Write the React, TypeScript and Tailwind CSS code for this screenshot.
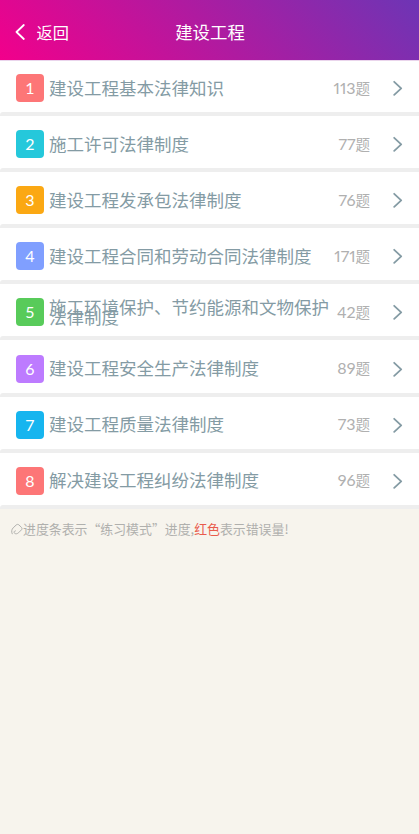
interface Chapter {
  title: string;
  count: number;
  color: string;
}

const chapters: Chapter[] = [
  { title: "建设工程基本法律知识", count: 113, color: "bg-[#fd7677]" },
  { title: "施工许可法律制度", count: 77, color: "bg-[#25c8db]" },
  { title: "建设工程发承包法律制度", count: 76, color: "bg-[#fba813]" },
  { title: "建设工程合同和劳动合同法律制度", count: 171, color: "bg-[#809fff]" },
  { title: "施工环境保护、节约能源和文物保护法律制度", count: 42, color: "bg-[#58cb5a]" },
  { title: "建设工程安全生产法律制度", count: 89, color: "bg-[#bd7bff]" },
  { title: "建设工程质量法律制度", count: 73, color: "bg-[#16b5ef]" },
  { title: "解决建设工程纠纷法律制度", count: 96, color: "bg-[#fd7677]" },
];

const Header: React.FC = () => {
  return (
    <header className="grid h-[60px] grid-cols-[1fr_auto_1fr] items-center bg-[linear-gradient(45deg,#f2008b_0%,#6d35b5_100%)] pt-[3px] text-white">
      <button className="flex items-center pl-[15px] text-[16.2px] leading-5">
        <svg width="10" height="16" viewBox="0 0 10 16" fill="none" className="mr-[11.5px]">
          <path
            d="M8.8 1 1.500 8l7.300 7"
            stroke="currentColor"
            strokeWidth="1.8"
            strokeLinecap="round"
            strokeLinejoin="round"
          />
        </svg>
        返回
      </button>
      <h1 className="pl-px text-[17.4px] leading-5">建设工程</h1>
    </header>
  );
};

const ChapterRow: React.FC<{ chapter: Chapter; index: number }> = ({
  chapter,
  index,
}) => {
  return (
    <li className="flex h-[56.1px] flex-col bg-white first:shadow-[inset_0_1px_0_#ead5ec]">
      <div className="flex grow items-center pt-1 pr-4 pl-4">
        <span
          className={`${chapter.color} mr-[5px] flex size-7 shrink-0 items-center justify-center rounded-[4px] font-['Lato','Noto_Sans_CJK_SC',sans-serif] text-[16px] text-white`}
        >
          {index + 1}
        </span>
        <span className="-mr-1 w-[284px] shrink-0 pb-px text-[17.5px] leading-[10px] text-[#849ba4]">
          {chapter.title}
        </span>
        <span className="flex min-w-0 grow items-baseline justify-end whitespace-nowrap font-['Lato','Noto_Sans_CJK_SC',sans-serif] leading-5 text-[#b0b0b0]">
          <span className="text-[16px] proportional-nums">{chapter.count}</span>
          <span className="text-[14.5px]">题</span>
        </span>
        <svg
          width="10"
          height="16"
          viewBox="0 0 10 16"
          fill="none"
          className="ml-[23px] shrink-0"
        >
          <path
            d="m1.200 1.800 7 6.500-7 6.500"
            stroke="#849ba4"
            strokeWidth="1.8"
            strokeLinecap="round"
            strokeLinejoin="round"
          />
        </svg>
      </div>
      <div className="h-1 shrink-0 rounded-tl-[3px] bg-[#eeeeee]" />
    </li>
  );
};

export default function App() {
  return (
    <div className="min-h-screen bg-[#f7f4ed] font-['Noto_Sans_CJK_SC',sans-serif]">
      <Header />
      <ul>
        {chapters.map((chapter, index) => (
          <ChapterRow key={chapter.title} chapter={chapter} index={index} />
        ))}
      </ul>
      <p className="flex items-center pt-[10px] pl-[11px] text-[12.9px] leading-5 text-[#b0b0ad]">
        <svg width="12" height="12" viewBox="0 0 12 12" fill="none">
          <path
            d="M1.200 10.800C.2 8.800.6 6.500 2.200 4.800L5 2.200c1-1 2.100-1.100 3-.2l2.400 2.300c.8.800.8 1.800 0 2.600L7.600 9.700c-1.300 1.200-3 1.400-4 .6-1-.9-.5-2.500.8-2.500"
            stroke="currentColor"
            strokeLinecap="round"
            strokeLinejoin="round"
          />
        </svg>
        <span>
          进度条表示“练习模式”进度,<span className="text-[#e95b4c]">红色</span>表示错误量!
        </span>
      </p>
    </div>
  );
}
